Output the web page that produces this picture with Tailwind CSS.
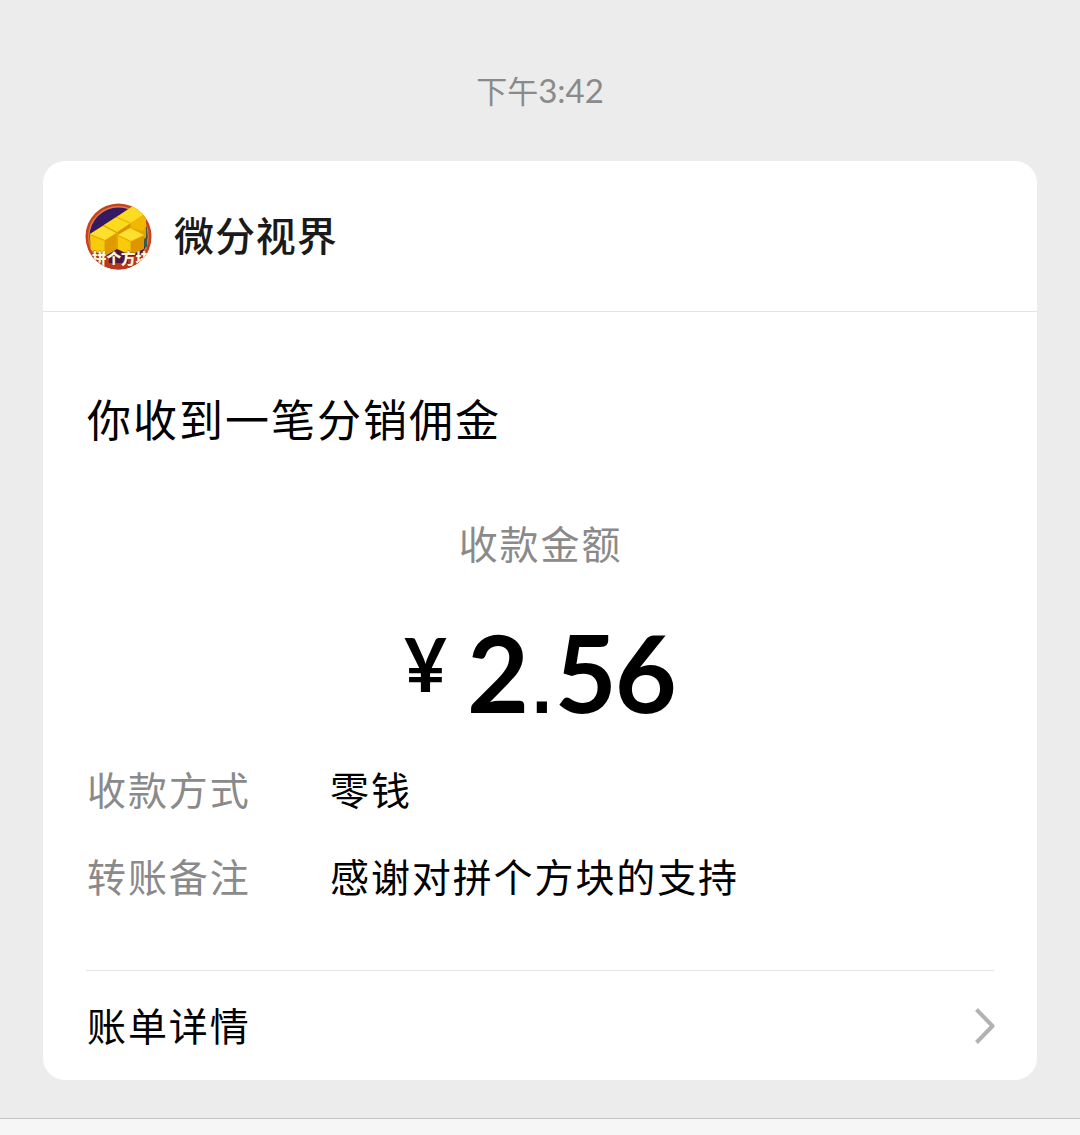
<!DOCTYPE html>
<html lang="zh-CN">
<head>
  <meta charset="UTF-8" />
  <meta name="viewport" content="width=device-width, initial-scale=1.0" />
  <title>微分视界</title>

  <!-- Tailwind CSS -->
  <script src="https://cdn.jsdelivr.net/npm/@tailwindcss/browser@4"></script>
</head>
<body class="bg-[#ececec] h-[1135px] overflow-hidden flex flex-col font-['Lato','Noto_Sans_CJK_SC',sans-serif] text-black">
  <!-- Time -->
  <div class="h-[161px] pt-[70px] text-center text-[31px] leading-[40px] text-[#8a8a8a]">下午<span class="text-[33px]">3:42</span></div>

  <!-- Message card -->
  <div class="mx-[43px] h-[919px] bg-white rounded-[22px] flex flex-col">
    <!-- Account -->
    <div class="h-[151px] border-b border-[#e3e3e3] pl-[42px] flex items-center">
      <svg class="w-[67px] h-[67px] shrink-0" viewBox="0 0 67 67">
        <defs>
          <clipPath id="avatar"><circle cx="33.5" cy="33.5" r="33" /></clipPath>
        </defs>
        <g clip-path="url(#avatar)">
          <rect width="67" height="67" fill="#c9421f" />
          <circle cx="33.5" cy="33.5" r="30.5" fill="#dd7a45" />
          <circle cx="33.5" cy="33.5" r="29" fill="#351a63" />
          <path d="M56 24H62V44H56Z" fill="#3d5a50" />
          <path d="M3 53H64V67H3Z" fill="#b8371e" />
          <path d="M24 50L34 45L43 50V60H24Z" fill="#4b1747" />
          <!-- Blocks -->
          <path d="M5 31L48 3L61 10V34L45 52L32 46L20 53L6 47Z" fill="#e5a500" />
          <path d="M32 14L48 3L61 10L46 20Z" fill="#fbdc20" />
          <path d="M46 20L61 10V22L58 28L46 25Z" fill="#f0b800" />
          <path d="M19 22L31 14.5L45 20.5L32 29Z" fill="#fcda1c" />
          <path d="M33 29.5L45 21V24L34 31Z" fill="#d98f00" />
          <path d="M5 31L18 23L31 30L20 37Z" fill="#fde02e" />
          <path d="M5 32L19.5 38V53L6 47Z" fill="#f8ca0c" />
          <path d="M20 38L31 31V46L20 53Z" fill="#e09a00" />
          <path d="M33 32L45 25L59 32L46 38Z" fill="#fde02e" />
          <path d="M33 33L45.5 39V52L33 46Z" fill="#f8ca0c" />
          <path d="M46 39L59 33V46L46 52Z" fill="#de9600" />
          <text x="7" y="61" font-size="14.5" font-weight="900" textLength="58" fill="#fff6dc" stroke="#8e3a18" stroke-width="0.6" paint-order="stroke" font-family="Noto Sans CJK SC">拼个方块</text>
        </g>
      </svg>
      <span class="ml-[22px] text-[40px] leading-[58px] tracking-[0.9px] font-medium text-[#1a1a1a]">微分视界</span>
    </div>

    <!-- Body -->
    <div class="mx-[43px] h-[659px] border-b border-[#e5e5e5]">
      <h2 class="pl-[1px] pt-[75px] text-[44px] leading-[66px] tracking-[2px]">你收到一笔分销佣金</h2>
      <div class="mt-[62px] pl-[1px] text-center text-[39px] leading-[58px] tracking-[1.9px] text-[#8a8a8a]">收款金额</div>
      <div class="mt-[35px] h-[140px] pl-[318px] flex font-bold">
        <span class="mt-[19px] w-[63px] text-[74px] leading-[74px]">¥</span>
        <span class="text-[107px] leading-[128px] -tracking-[2px]">2<span class="font-['Liberation_Sans'] font-normal">.</span>56</span>
      </div>
      <div class="mt-[13px] pl-[1px] flex text-[39px] leading-[58px] tracking-[1.9px]">
        <span class="w-[243px] text-[#8a8a8a]">收款方式</span>
        <span>零钱</span>
      </div>
      <div class="mt-[29px] pl-[1px] flex text-[39px] leading-[58px] tracking-[1.9px]">
        <span class="w-[243px] text-[#8a8a8a]">转账备注</span>
        <span>感谢对拼个方块的支持</span>
      </div>
    </div>

    <!-- Bill details -->
    <div class="ml-[44px] mr-[42px] flex-1 flex items-center justify-between">
      <span class="text-[39px] leading-[58px] tracking-[1.9px]">账单详情</span>
      <svg class="w-[20px] h-[36px]" viewBox="0 0 20 36" fill="none" stroke="#b2b2b2" stroke-width="4">
        <path d="M1.5 1.5L17.5 18L1.5 34.5" stroke-linejoin="round" />
      </svg>
    </div>
  </div>

  <!-- Bottom bar -->
  <div class="mt-[38px] flex-1 border-t border-[#c4c4c4] bg-[#f6f6f6]"></div>
</body>
</html>
